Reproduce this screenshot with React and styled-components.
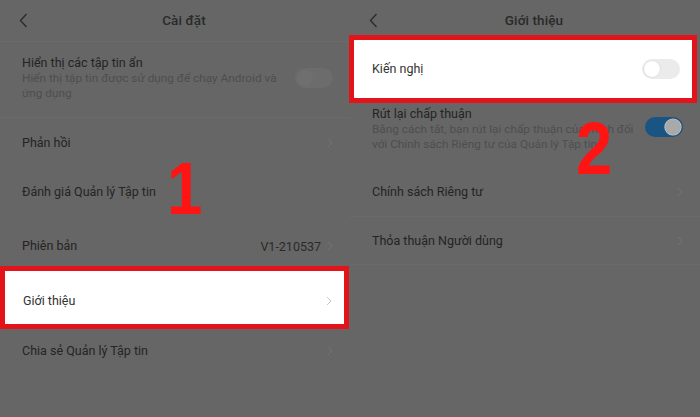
import React from "react";
import styled, { createGlobalStyle } from "styled-components";

const Global = createGlobalStyle`
  html, body { margin: 0; padding: 0; background: #666666; }
  * { box-sizing: border-box; }
`;

const Screen = styled.div`
  width: 700px;
  height: 417px;
  display: flex;
  background: #666666;
  font-family: Roboto, "Noto Sans", "Liberation Sans", sans-serif;
  overflow: hidden;
`;

const Panel = styled.div`
  position: relative;
  width: 350px;
  height: 417px;
  display: flex;
  flex-direction: column;
`;

const Header = styled.div`
  height: ${(p) => p.$h}px;
  flex: none;
  display: grid;
  grid-template-columns: 1fr auto 1fr;
  align-items: start;
  padding: 12px 0 0 18px;
  border-bottom: ${(p) => (p.$line ? "1px solid #6b6b6b" : "none")};
`;

const Back = styled.svg`
  width: 11px;
  height: 15px;
  margin-top: 1px;
`;

const Title = styled.div`
  font-size: 13.5px;
  font-weight: 500;
  line-height: 16px;
  color: #2a2a2a;
  letter-spacing: 0.1px;
`;

const Row = styled.div`
  flex: none;
  height: ${(p) => p.$h}px;
  display: flex;
  align-items: ${(p) => (p.$top ? "flex-start" : "center")};
  padding: ${(p) => p.$pt || 0}px 17px 0 22px;
  border-bottom: ${(p) => (p.$line ? "1px solid #6b6b6b" : "none")};
  background: transparent;
`;

const Highlight = styled.div`
  flex: none;
  height: ${(p) => p.$h}px;
  margin: ${(p) => p.$m};
  display: flex;
  align-items: center;
  padding: ${(p) => p.$pt || 0}px 12px 0 18px;
  background: #ffffff;
  border: 5px solid #e2141a;
`;

const Texts = styled.div`
  flex: 1;
  display: flex;
  flex-direction: column;
`;

const Label = styled.div`
  font-size: 12.5px;
  line-height: 16px;
  color: ${(p) => (p.$light ? "#333333" : "#242424")};
  white-space: nowrap;
`;

const Sub = styled.div`
  font-size: 11.8px;
  line-height: 15px;
  color: #4e4e4e;
  white-space: nowrap;
`;

const Value = styled.div`
  font-size: 12.5px;
  color: #2a2a2a;
  margin-right: 6px;
`;

const Chevron = styled.svg`
  width: 6px;
  height: 10px;
  flex: none;
`;

const Track = styled.div`
  flex: none;
  width: 38px;
  height: 20px;
  border-radius: 10px;
  margin-top: ${(p) => p.$mt || 0}px;
  display: flex;
  align-items: center;
  justify-content: ${(p) => (p.$on ? "flex-end" : "flex-start")};
  padding: 0 2px;
  background: ${(p) => (p.$on ? "#1a5483" : p.$dim ? "#6c6c6c" : "#ebebeb")};
`;

const Knob = styled.div`
  width: 16px;
  height: 16px;
  border-radius: 50%;
  background: ${(p) => (p.$on ? "#a9a9a9" : p.$dim ? "#6f6f6f" : "#ffffff")};
  box-shadow: ${(p) => (p.$dim ? "none" : "0 0 0 0.6px #d6d6d6")};
`;

const Step = styled.div`
  position: absolute;
  left: ${(p) => p.$x}px;
  top: ${(p) => p.$y}px;
  font-family: "Liberation Sans", Arial, sans-serif;
  font-weight: 700;
  font-size: 74px;
  line-height: 74px;
  color: #ff1414;
  transform: scaleX(${(p) => p.$sx || 1});
  transform-origin: left top;
`;

const BackIcon = () => (
  <Back viewBox="0 0 11 15">
    <path d="M8.5 1 L2.5 7.5 L8.5 14" fill="none" stroke="#2a2a2a" strokeWidth="1.3" />
  </Back>
);

const Chev = ({ light }) => (
  <Chevron viewBox="0 0 6 10">
    <path d="M1 1 L5 5 L1 9" fill="none" stroke={light ? "#c9c9c9" : "#737373"} strokeWidth="1" />
  </Chevron>
);

const Toggle = ({ on, dim, mt }) => (
  <Track $on={on} $dim={dim} $mt={mt}>
    <Knob $on={on} $dim={dim} />
  </Track>
);

export default function App() {
  return (
    <>
      <Global />
      <Screen>
        <Panel>
          <Header $h={42} $line>
            <BackIcon />
            <Title>Cài đặt</Title>
            <span />
          </Header>
          <Row $h={76} $top $pt={13} $line>
            <Texts>
              <Label>Hiển thị các tập tin ẩn</Label>
              <Sub>Hiển thị tập tin được sử dụng để chạy Android và</Sub>
              <Sub>ứng dụng</Sub>
            </Texts>
            <Toggle dim mt={13} />
          </Row>
          <Row $h={50}>
            <Texts>
              <Label>Phản hồi</Label>
            </Texts>
            <Chev />
          </Row>
          <Row $h={48}>
            <Texts>
              <Label>Đánh giá Quản lý Tập tin</Label>
            </Texts>
          </Row>
          <Row $h={50} $pt={10}>
            <Texts>
              <Label>Phiên bản</Label>
            </Texts>
            <Value>V1-210537</Value>
            <Chev />
          </Row>
          <Highlight $h={63} $pt={6} $m="0 1px 0 0">
            <Texts>
              <Label $light>Giới thiệu</Label>
            </Texts>
            <Chev light />
          </Highlight>
          <Row $h={44}>
            <Texts>
              <Label>Chia sẻ Quản lý Tập tin</Label>
            </Texts>
            <Chev />
          </Row>
          <Step $x={167} $y={152} $sx={0.86}>1</Step>
        </Panel>
        <Panel>
          <Header $h={35}>
            <BackIcon />
            <Title>Giới thiệu</Title>
            <span />
          </Header>
          <Highlight $h={68} $m="0 3px 0 -1px">
            <Texts>
              <Label $light>Kiến nghị</Label>
            </Texts>
            <Toggle />
          </Highlight>
          <Row $h={64} $top $pt={3}>
            <Texts>
              <Label>Rút lại chấp thuận</Label>
              <Sub>Bằng cách tắt, bạn rút lại chấp thuận của mình đối</Sub>
              <Sub>với Chính sách Riêng tư của Quản lý Tập tin</Sub>
            </Texts>
            <Toggle on mt={11} />
          </Row>
          <Row $h={50} $line>
            <Texts>
              <Label>Chính sách Riêng tư</Label>
            </Texts>
            <Chev />
          </Row>
          <Row $h={48} $line>
            <Texts>
              <Label>Thỏa thuận Người dùng</Label>
            </Texts>
            <Chev />
          </Row>
          <Step $x={226} $y={112} $sx={0.88}>2</Step>
        </Panel>
      </Screen>
    </>
  );
}
